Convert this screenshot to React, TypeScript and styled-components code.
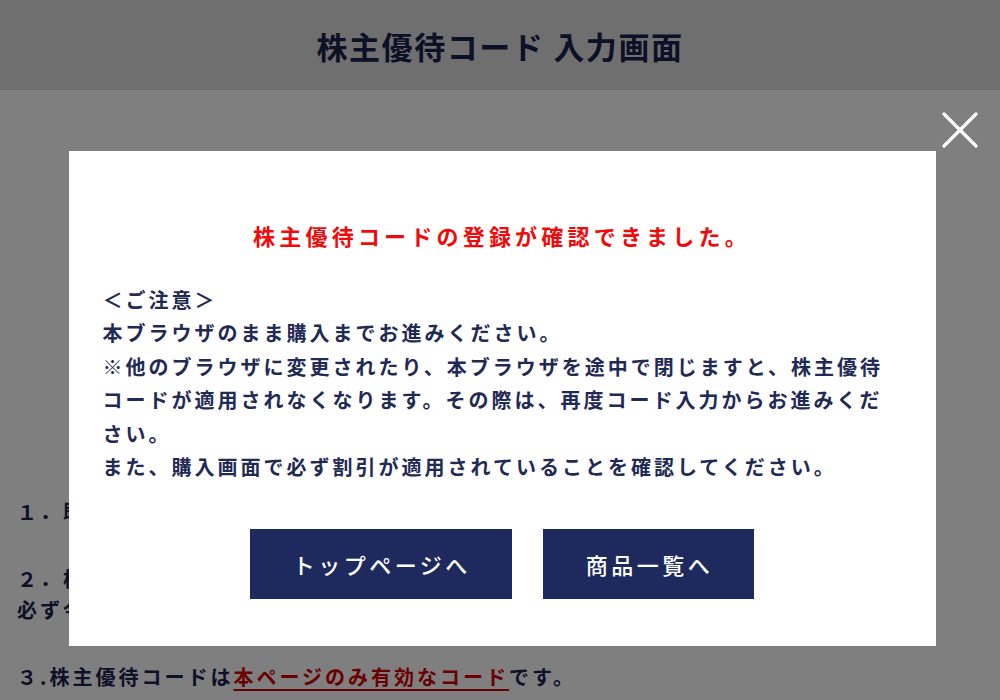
import React from 'react'
import styled, { createGlobalStyle } from 'styled-components'

const GlobalStyle = createGlobalStyle`
  html, body {
    margin: 0;
    padding: 0;
    background: #fff;
    font-family: "Noto Sans CJK JP", "Noto Sans", sans-serif;
    color: #1f2a55;
  }
`

const Header = styled.header`
  height: 90px;
  display: flex;
  align-items: center;
  justify-content: center;
  background: #dedede;
`

const PageTitle = styled.h1`
  margin: 0;
  font-size: 31px;
  font-weight: 700;
  letter-spacing: 1.6px;
  color: #1b2250;
`

const Main = styled.main`
  padding: 406px 0 0 17px;
`

const Step = styled.p`
  margin: 0 0 36px;
  font-size: 20px;
  font-weight: 700;
  line-height: 31px;
  letter-spacing: 3px;
  color: #1b2250;
`

const Emphasis = styled.span`
  color: #d40000;
  text-decoration: underline;
  text-underline-offset: 4px;
  text-decoration-thickness: 2px;
`

const Overlay = styled.div`
  position: fixed;
  inset: 0;
  background: rgba(0, 0, 0, 0.5);
  display: flex;
  flex-direction: column;
  align-items: center;
  padding: 151px 0 0 4px;
  box-sizing: border-box;
`

const CloseButton = styled.button`
  position: absolute;
  top: 112px;
  left: 942px;
  width: 36px;
  height: 36px;
  padding: 0;
  border: 0;
  background: transparent;
  cursor: pointer;
`

const Modal = styled.div`
  width: 867px;
  box-sizing: border-box;
  background: #fff;
  padding: 68px 34px 47px;
  display: flex;
  flex-direction: column;
`

const ModalTitle = styled.p`
  margin: 0;
  text-align: center;
  font-size: 22px;
  font-weight: 700;
  line-height: 33px;
  letter-spacing: 4.2px;
  color: #f00a0a;
`

const Notice = styled.p`
  margin: 31px 0 0;
  font-size: 20px;
  font-weight: 700;
  line-height: 33.4px;
  letter-spacing: 3px;
  color: #1f2a55;
`

const Buttons = styled.div`
  margin-top: 46px;
  display: flex;
  justify-content: center;
  gap: 31px;
`

const ActionButton = styled.a`
  height: 70px;
  display: flex;
  align-items: center;
  justify-content: center;
  padding: 0 41px 0 43px;
  background: #1e2a5e;
  color: #fff;
  font-size: 22px;
  font-weight: 500;
  letter-spacing: 3.5px;
  text-decoration: none;
  cursor: pointer;
`

const App = () => {
  return (
    <>
      <GlobalStyle />
      <Header>
        <PageTitle>株主優待コード 入力画面</PageTitle>
      </Header>
      <Main>
        <Step>１．既にお持ちのコードを入力</Step>
        <Step>
          ２．株主優待コードを
          <br />
          必ず今すぐご入力ください。
        </Step>
        <Step>
          ３.株主優待コードは<Emphasis>本ページのみ有効なコード</Emphasis>です。
        </Step>
      </Main>
      <Overlay>
        <CloseButton aria-label="閉じる">
          <svg width="36" height="36" viewBox="0 0 36 36">
            <path d="M2 2L34 34M34 2L2 34" stroke="#fff" strokeWidth="3.2" strokeLinecap="round" />
          </svg>
        </CloseButton>
        <Modal>
          <ModalTitle>株主優待コードの登録が確認できました。</ModalTitle>
          <Notice>
            ＜ご注意＞
            <br />
            本ブラウザのまま購入までお進みください。
            <br />
            ※他のブラウザに変更されたり、本ブラウザを途中で閉じますと、株主優待コードが適用されなくなります。その際は、再度コード入力からお進みください。
            <br />
            また、購入画面で必ず割引が適用されていることを確認してください。
          </Notice>
          <Buttons>
            <ActionButton>トップページへ</ActionButton>
            <ActionButton>商品一覧へ</ActionButton>
          </Buttons>
        </Modal>
      </Overlay>
    </>
  )
}

export default App
